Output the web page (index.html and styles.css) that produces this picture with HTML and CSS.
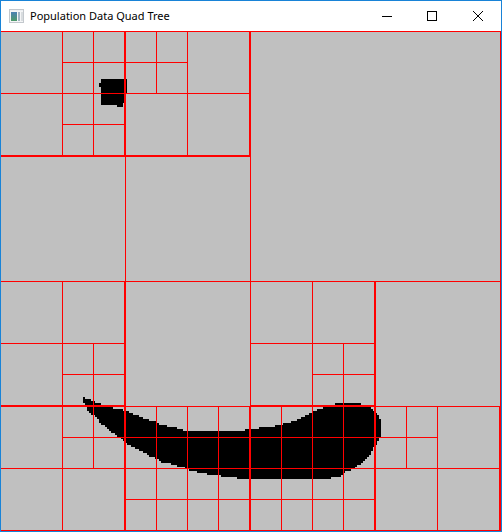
FILE: index.html
```html
<!DOCTYPE html>
<html lang="en">
<head>
<meta charset="utf-8">
<title>Population Data Quad Tree</title>
<link rel="stylesheet" href="styles.css">
</head>
<body>
<div class="window">
  <header class="titlebar">
    <svg class="app-icon" viewBox="0 0 15 14" aria-hidden="true">
      <defs>
        <linearGradient id="scene" x1="0" y1="0" x2="0" y2="1">
          <stop offset="0" stop-color="#4a80b4"/>
          <stop offset="1" stop-color="#4c9a68"/>
        </linearGradient>
      </defs>
      <rect class="icon-frame" width="15" height="14"/>
      <rect class="icon-bar" x="1" y="1" width="13" height="1"/>
      <rect class="icon-face" x="1" y="2" width="13" height="11"/>
      <rect fill="url(#scene)" x="2" y="3" width="6" height="9"/>
      <rect class="icon-side" x="9" y="3" width="2" height="9"/>
      <rect class="icon-panel" x="12" y="3" width="2" height="9"/>
    </svg>
    <h1 class="title">Population Data Quad Tree</h1>
    <div class="controls">
      <button class="control" type="button" aria-label="Minimize">
        <svg class="glyph" viewBox="0 0 10 10"><rect y="5" width="10" height="1"/></svg>
      </button>
      <button class="control" type="button" aria-label="Maximize">
        <svg class="glyph" viewBox="0 0 10 10"><path fill-rule="evenodd" d="M0 0H10V10H0ZM1 1V9H9V1Z"/></svg>
      </button>
      <button class="control close" type="button" aria-label="Close">
        <svg class="glyph cross" viewBox="0 0 10 10"><path d="M0 0L10 10M10 0L0 10"/></svg>
      </button>
    </div>
  </header>
  <main>
    <svg class="map" viewBox="1 31 500 500" role="img" aria-label="Quad tree subdivision of population data">
      <g class="population">
        <path d="M101 79H127V93H125V103H123V107H117V105H101V87H99V83H101Z"/>
        <path d="M83 397H85V399H91V401H95V403H101V407H113V409H123V411H129V413H133V415H139V417H143V419H149V421H157V423H159V425H167V427H177V429H183V431H245V429H259V427H275V425H283V423H291V421H297V419H301V417H305V415H309V413H313V411H317V409H323V407H327V405H335V403H361V405H367V407H371V409H373V411H375V413H377V415H379V419H381V437H379V441H377V445H375V447H373V451H371V455H369V457H367V459H365V461H363V463H361V465H357V467H355V469H351V471H345V473H343V475H341V477H331V479H237V477H221V475H207V473H197V471H189V469H185V467H177V465H171V463H167V463H161V461H159V459H155V457H149V455H147V453H143V451H139V449H135V447H131V445H127V443H125V441H123V439H121V437H117V435H115V433H111V431H109V429H107V427H105V425H101V423H99V419H97V417H95V415H91V413H89V411H87V407H85V403H83Z"/>
      </g>
      <g class="tree">
        <!-- root and first-level bounds -->
        <rect x="1" y="31" width="500" height="1"/>
        <rect x="500" y="31" width="1" height="500"/>
        <rect x="1" y="530" width="500" height="1"/>
        <rect x="250" y="31" width="1" height="500"/>
        <rect x="1" y="281" width="500" height="1"/>
        <!-- north-west -->
        <rect x="62" y="31" width="1" height="125"/>
        <rect x="93" y="31" width="1" height="125"/>
        <rect x="124" y="31" width="2" height="126"/>
        <rect x="156" y="31" width="1" height="63"/>
        <rect x="187" y="31" width="1" height="125"/>
        <rect x="249" y="31" width="2" height="126"/>
        <rect x="62" y="62" width="126" height="1"/>
        <rect x="1" y="93" width="249" height="1"/>
        <rect x="62" y="124" width="63" height="1"/>
        <rect x="1" y="155" width="249" height="2"/>
        <rect x="125" y="156" width="1" height="125"/>
        <!-- south-west -->
        <rect x="62" y="281" width="1" height="250"/>
        <rect x="124" y="281" width="2" height="250"/>
        <rect x="93" y="343" width="1" height="126"/>
        <rect x="1" y="343" width="124" height="1"/>
        <rect x="62" y="374" width="63" height="1"/>
        <rect x="1" y="405" width="125" height="2"/>
        <rect x="156" y="406" width="1" height="125"/>
        <rect x="187" y="406" width="1" height="125"/>
        <rect x="218" y="406" width="1" height="125"/>
        <rect x="249" y="406" width="2" height="125"/>
        <!-- south-east -->
        <rect x="312" y="281" width="1" height="250"/>
        <rect x="343" y="343" width="1" height="188"/>
        <rect x="374" y="281" width="2" height="250"/>
        <rect x="250" y="343" width="125" height="1"/>
        <rect x="312" y="374" width="63" height="1"/>
        <rect x="250" y="405" width="126" height="2"/>
        <rect x="281" y="406" width="1" height="125"/>
        <rect x="406" y="406" width="1" height="63"/>
        <rect x="437" y="406" width="1" height="125"/>
        <rect x="499" y="406" width="2" height="125"/>
        <!-- rows shared by both southern quadrants -->
        <rect x="1" y="406" width="500" height="1"/>
        <rect x="62" y="437" width="376" height="1"/>
        <rect x="1" y="468" width="500" height="1"/>
        <rect x="125" y="499" width="250" height="1"/>
      </g>
    </svg>
  </main>
</div>
</body>
</html>
```
FILE: styles.css
```css
* {
  box-sizing: border-box;
}

body {
  margin: 0;
  background: #ffffff;
  font-family: "Noto Sans", "Open Sans", sans-serif;
}

.window {
  border: 1px solid #1883d7;
}

.titlebar {
  display: flex;
  align-items: center;
  height: 30px;
  padding-left: 8px;
  background: #ffffff;
}

.app-icon {
  width: 15px;
  height: 14px;
  margin-right: 6px;
  shape-rendering: crispEdges;
}

.icon-frame { fill: #c3c8cd; }
.icon-bar { fill: #eceff2; }
.icon-face { fill: #f4f5f6; }
.icon-side { fill: #9fb4c4; }
.icon-panel { fill: #d8dcdf; }

.title {
  flex: 1;
  margin: 0;
  color: #000000;
  font-size: 11px;
  font-weight: 400;
  line-height: 16px;
  white-space: nowrap;
}

.controls {
  display: flex;
  height: 100%;
}

.control {
  display: flex;
  align-items: center;
  width: 45px;
  padding: 0 18px 0 17px;
  border: 0;
  background: transparent;
}

.close {
  width: 46px;
  padding: 0 18px;
}

.glyph {
  width: 10px;
  height: 10px;
  fill: #000000;
  shape-rendering: crispEdges;
}

.cross {
  stroke: #000000;
  shape-rendering: auto;
}

.map {
  display: block;
  width: 100%;
  height: auto;
  background: #c0c0c0;
  shape-rendering: crispEdges;
}

.population {
  fill: #000000;
}

.tree {
  fill: #ff0000;
}
```
